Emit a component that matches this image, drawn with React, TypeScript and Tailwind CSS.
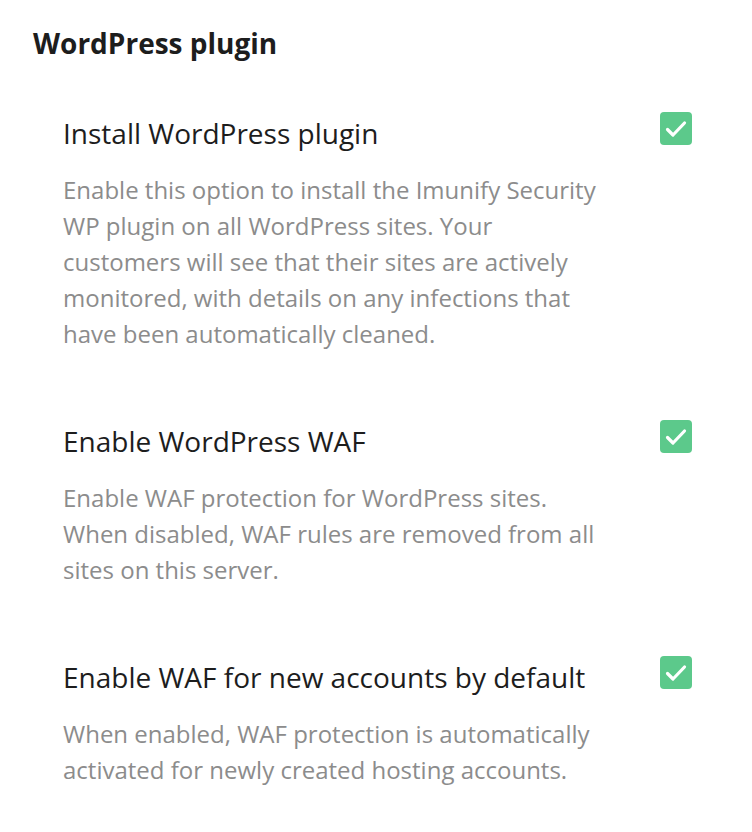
const items = [
  {
    title: "Install WordPress plugin",
    description:
      "Enable this option to install the Imunify Security WP plugin on all WordPress sites. Your customers will see that their sites are actively monitored, with details on any infections that have been automatically cleaned.",
  },
  {
    title: "Enable WordPress WAF",
    description:
      "Enable WAF protection for WordPress sites. When disabled, WAF rules are removed from all sites on this server.",
  },
  {
    title: "Enable WAF for new accounts by default",
    description:
      "When enabled, WAF protection is automatically activated for newly created hosting accounts.",
  },
];

function CheckedBox() {
  return (
    <div className="w-[32px] h-[33px] shrink-0 rounded-[4px] bg-[#5cc98b] flex items-center justify-center">
      <svg width="24" height="24" viewBox="0 0 24 24" fill="none">
        <path
          d="M3.5 12.5 L9 18 L20.5 6"
          stroke="white"
          strokeWidth="3.2"
          strokeLinecap="round"
          strokeLinejoin="round"
        />
      </svg>
    </div>
  );
}

export default function App() {
  return (
    <div className="min-h-screen bg-white font-['Open_Sans',sans-serif] pl-[33px] pr-[60px] pt-[25px]">
      {/* Section header */}
      <h2 className="text-[28px] leading-9 font-bold text-[#1d1d1d]">
        WordPress plugin
      </h2>

      <div className="pl-[30px] pt-[51px] flex flex-col gap-[68px]">
        {items.map((item) => (
          <div key={item.title}>
            <div className="flex items-start justify-between">
              <h3 className="pt-[3px] text-[28px] leading-9 text-[#1d1d1d]">
                {item.title}
              </h3>
              <CheckedBox />
            </div>
            <p className="mt-[21px] max-w-[540px] text-[24px] leading-9 text-[#8c8c8c]">
              {item.description}
            </p>
          </div>
        ))}
      </div>
    </div>
  );
}
